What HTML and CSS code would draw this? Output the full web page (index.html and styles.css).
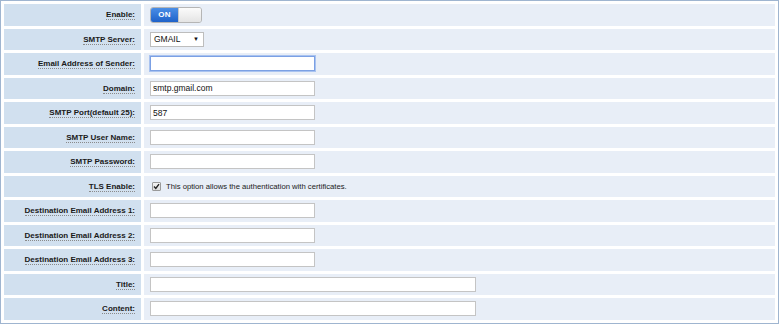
FILE: index.html
```html
<!DOCTYPE html>
<html lang="en">
<head>
  <meta charset="UTF-8" />
  <title>SMTP Settings</title>
  <link rel="stylesheet" href="styles.css">
</head>
<body>

  <table class="settings">
    <tr>
      <th><span class="tip">Enable:</span></th>
      <td>
        <div class="switch">
          <span class="switch-on">ON</span>
          <span class="switch-off"></span>
        </div>
      </td>
    </tr>
    <tr>
      <th><span class="tip">SMTP Server:</span></th>
      <td>
        <div class="select">
          <span>GMAIL</span>
          <span class="arrow">&#9660;</span>
        </div>
      </td>
    </tr>
    <tr>
      <th><span class="tip">Email Address of Sender:</span></th>
      <td><input type="text" class="field focused" value=""></td>
    </tr>
    <tr>
      <th><span class="tip">Domain:</span></th>
      <td><input type="text" class="field" value="smtp.gmail.com"></td>
    </tr>
    <tr>
      <th><span class="tip">SMTP Port(default 25):</span></th>
      <td><input type="text" class="field" value="587"></td>
    </tr>
    <tr>
      <th><span class="tip">SMTP User Name:</span></th>
      <td><input type="text" class="field" value=""></td>
    </tr>
    <tr>
      <th><span class="tip">SMTP Password:</span></th>
      <td><input type="text" class="field" value=""></td>
    </tr>
    <tr>
      <th><span class="tip">TLS Enable:</span></th>
      <td>
        <label class="check">
          <span class="box">
            <svg width="7" height="7" viewBox="0 0 7 7"><path d="M1 3.6 L2.8 5.4 L6 1.2" fill="none" stroke="#222" stroke-width="1.4"/></svg>
          </span>
          This option allows the authentication with certificates.
        </label>
      </td>
    </tr>
    <tr>
      <th><span class="tip">Destination Email Address 1:</span></th>
      <td><input type="text" class="field" value=""></td>
    </tr>
    <tr>
      <th><span class="tip">Destination Email Address 2:</span></th>
      <td><input type="text" class="field" value=""></td>
    </tr>
    <tr>
      <th><span class="tip">Destination Email Address 3:</span></th>
      <td><input type="text" class="field" value=""></td>
    </tr>
    <tr>
      <th><span class="tip">Title:</span></th>
      <td><input type="text" class="field wide" value=""></td>
    </tr>
    <tr>
      <th><span class="tip">Content:</span></th>
      <td><input type="text" class="field wide" value=""></td>
    </tr>
  </table>

</body>
</html>
```

FILE: styles.css
```css
* {
  box-sizing: border-box;
}

body {
  margin: 0;
  background: #ffffff;
  font-family: 'Liberation Sans', Arial, sans-serif;
  font-size: 8px;
  color: #222;
}

.settings {
  width: 779px;
  height: 323px;
  border: 1px solid #9fb5d0;
  border-collapse: separate;
  border-spacing: 3px;
  table-layout: fixed;
}

.settings th,
.settings td {
  height: 21.5px;
  padding: 0;
}

.settings th {
  width: 137px;
  background: #d1e0ef;
  text-align: right;
  padding-right: 6px;
  font-weight: bold;
  color: #1a1a1a;
}

.settings td {
  background: #e8eef7;
  padding-left: 6px;
  text-align: left;
}

.tip {
  border-bottom: 1px dotted #8a8a8a;
}

.field {
  display: block;
  width: 165px;
  height: 15px;
  border: 1px solid #c4c4c4;
  background: #fff;
  padding: 0 2px;
  font-family: 'Liberation Sans', Arial, sans-serif;
  font-size: 8.5px;
  color: #111;
  outline: none;
}

.field.wide {
  width: 326px;
}

.field.focused {
  border: 1px solid #7ba0e4;
  box-shadow: 0 0 0 1px #a9c3f0;
}

.switch {
  display: flex;
  width: 52px;
  height: 16px;
  border: 1px solid #b5b5b5;
  border-radius: 3px;
  overflow: hidden;
}

.switch-on {
  width: 27px;
  background: linear-gradient(#4a8ee6, #1f62c9);
  color: #fff;
  font-weight: bold;
  font-size: 8px;
  display: flex;
  align-items: center;
  justify-content: center;
  letter-spacing: 0.3px;
}

.switch-off {
  flex: 1;
  background: linear-gradient(#fbfbfb, #e4e4e4);
  border-left: 1px solid #c8c8c8;
}

.select {
  display: flex;
  align-items: center;
  justify-content: space-between;
  width: 54px;
  height: 15px;
  border: 1px solid #bdbdbd;
  background: #fff;
  padding: 0 4px 0 3px;
  font-size: 8.5px;
  color: #111;
}

.select .arrow {
  font-size: 6px;
}

.check {
  display: flex;
  align-items: center;
  gap: 5px;
  padding-left: 2px;
  font-size: 7.7px;
  color: #1a1a1a;
}

.box {
  display: flex;
  align-items: center;
  justify-content: center;
  width: 9px;
  height: 9px;
  border: 1px solid #9a9a9a;
  border-radius: 1px;
  background: linear-gradient(#f4f4f4, #dcdcdc);
}
```
